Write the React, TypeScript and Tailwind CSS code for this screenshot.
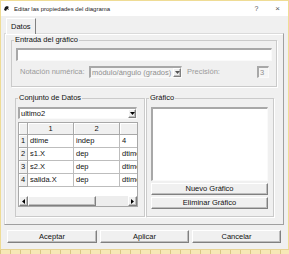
import React from "react";

const raised =
  "bg-[#f0f0f0] border border-t-white border-l-white border-r-[#808080] border-b-[#808080] shadow-[inset_-1px_-1px_0_#bdbdbd]";
const cellHead =
  "bg-[#f0f0f0] border-r border-b border-[#a8a8a8] shadow-[inset_1px_1px_0_#fff]";
const sunken =
  "border-t-2 border-l-2 border-r border-b border-t-[#a8a8a8] border-l-[#a8a8a8] border-r-[#fafafa] border-b-[#fafafa]";

const ROWS = [
  ["1", "dtime", "indep", "4"],
  ["2", "s1.X", "dep", "dtime"],
  ["3", "s2.X", "dep", "dtime"],
  ["4", "salida.X", "dep", "dtime"],
];

function Arrow({ dir = "down", color = "#000" }: { dir?: "down" | "left" | "right"; color?: string }) {
  const d = dir === "down" ? "M0 0h5L2.5 3z" : dir === "left" ? "M3 0v5L0 2.5z" : "M0 0v5L3 2.5z";
  const w = dir === "down" ? 5 : 3;
  const h = dir === "down" ? 3 : 5;
  return (
    <svg width={w} height={h} viewBox={`0 0 ${w} ${h}`}>
      <path d={d} fill={color} />
    </svg>
  );
}

function Combo({ value, disabled, className }: { value: string; disabled?: boolean; className: string }) {
  return (
    <div className={`flex ${sunken} ${disabled ? "bg-[#f5f5f5] text-[#8f8f8f]" : "bg-white"} ${className}`}>
      <span className="flex-1 flex items-center pl-[1px] overflow-hidden whitespace-nowrap">{value}</span>
      <span className={`w-[8px] flex items-center justify-center ${raised}`}>
        <Arrow color={disabled ? "#555" : "#000"} />
      </span>
    </div>
  );
}

function Group({ label, className, children }: { label: string; className: string; children: React.ReactNode }) {
  return (
    <fieldset className={`border border-[#cacaca] shadow-[1px_1px_0_#fff] ${className}`}>
      <legend className="ml-[2px] px-[1px] h-[12px] leading-[12px]">{label}</legend>
      {children}
    </fieldset>
  );
}

function Button({ label, className }: { label: string; className: string }) {
  return <div className={`flex items-center justify-center ${raised} ${className}`}>{label}</div>;
}

function DataTable() {
  return (
    <div className="ml-[2px] mt-[3px] w-[120px] h-[85px] border border-[#a8a8a8] bg-white flex flex-col overflow-hidden">
      <div className="flex h-[12px] shrink-0">
        <div className={`w-[9px] shrink-0 ${cellHead}`} />
        <div className={`w-[46px] shrink-0 flex items-center justify-center ${cellHead}`}>1</div>
        <div className={`w-[46px] shrink-0 flex items-center justify-center ${cellHead}`}>2</div>
        <div className={`w-[46px] shrink-0 ${cellHead}`} />
      </div>
      {ROWS.map((r) => (
        <div key={r[0]} className="flex h-[13px] shrink-0">
          <div className={`w-[9px] shrink-0 flex items-center justify-center ${cellHead}`}>{r[0]}</div>
          {r.slice(1).map((c, i) => (
            <div
              key={i}
              className="w-[46px] shrink-0 flex items-center pl-[2px] border-r border-b border-[#bdbdbd] overflow-hidden whitespace-nowrap"
            >
              {c}
            </div>
          ))}
        </div>
      ))}
      <div className="flex-1" />
      <div className="flex h-[10px] shrink-0 bg-[#ededed]">
        <div className={`w-[9px] flex items-center justify-center ${raised}`}>
          <Arrow dir="left" />
        </div>
        <div className={`w-[68px] ${raised}`} />
        <div className="flex-1" />
        <div className={`w-[9px] flex items-center justify-center ${raised}`}>
          <Arrow dir="right" />
        </div>
      </div>
    </div>
  );
}

export default function App() {
  return (
    <div className="w-[289px] h-[254px] flex flex-col overflow-hidden font-['Liberation_Sans',Arial,sans-serif] text-[7.5px] leading-none text-[#111]">
      <div className="h-[249px] flex flex-col bg-[#f0f0f0] border-x border-t border-[#efdc95]">
        {/* title bar */}
        <div className="h-[15px] shrink-0 bg-white flex items-center text-[6px] text-[#222]">
          <svg className="ml-[2px]" width="7" height="7" viewBox="0 0 7 7">
            <path d="M1 5 L2 2 L4 1 L6 2 L5 3 L6 5 L4 4 L3 6 Z" fill="#1a1a1a" />
          </svg>
          <span className="ml-[4px]">Editar las propiedades del diagrama</span>
          <span className="ml-auto text-[7px] text-[#555]">?</span>
          <span className="ml-[17px] mr-[8px] text-[8px] text-[#555]">×</span>
        </div>

        {/* tab strip */}
        <div className="h-[17px] shrink-0 flex items-end pl-[5px]">
          <div className="relative z-10 -mb-px h-[16px] w-[30px] pl-[4px] flex items-center bg-[#f0f0f0] border-l border-t border-r border-l-white border-t-white border-r-[#808080]">
            Datos
          </div>
        </div>

        {/* panel */}
        <div className="ml-[3px] w-[280px] h-[192px] shrink-0 border border-[#dadada] border-r-[#a0a0a0] border-b-[#a0a0a0] shadow-[inset_1px_1px_0_#fff]">
          <Group label="Entrada del gráfico" className="ml-[6px] w-[266px] pb-[8px]">
            <div className={`ml-[4px] mt-[2px] w-[256px] h-[13px] bg-white ${sunken}`} />
            <div className="ml-[8px] mt-[5px] w-[249px] h-[12px] flex items-center text-[#9a9a9a]">
              <span className="w-[69px] shrink-0">Notación numérica:</span>
              <Combo value="módulo/ángulo (grados)" disabled className="w-[93px] h-[12px] shrink-0" />
              <span className="ml-[5px]">Precisión:</span>
              <div className={`ml-auto w-[12px] h-[12px] flex items-center pl-[1px] bg-[#f5f5f5] text-[#8f8f8f] ${sunken}`}>
                3
              </div>
            </div>
          </Group>

          <div className="flex ml-[10px] mt-[5px]">
            <Group label="Conjunto de Datos" className="w-[130px] h-[125px]">
              <Combo value="ultimo2" className="ml-[2px] mt-[3px] w-[119px] h-[12px]" />
              <DataTable />
            </Group>
            <Group label="Gráfico" className="ml-[1px] w-[128px] h-[125px]">
              <div className={`ml-[4px] mt-[3px] w-[117px] h-[74px] bg-white ${sunken}`} />
              <Button label="Nuevo Gráfico" className="ml-[4px] mt-[2px] w-[117px] h-[12px]" />
              <Button label="Eliminar Gráfico" className="ml-[4px] mt-[2px] w-[117px] h-[12px]" />
            </Group>
          </div>
        </div>

        {/* bottom buttons */}
        <div className="mt-[5px] pl-[6px] flex gap-[3px]">
          <Button label="Aceptar" className="w-[90px] h-[13px]" />
          <Button label="Aplicar" className="w-[89px] h-[13px]" />
          <Button label="Cancelar" className="w-[89px] h-[13px]" />
        </div>
      </div>
      <div className="h-[5px] bg-[#f6e8b6] border-t border-[#e6d393] bg-[repeating-linear-gradient(90deg,#d8c584_0,#d8c584_1px,transparent_1px,transparent_10px)]" />
    </div>
  );
}
